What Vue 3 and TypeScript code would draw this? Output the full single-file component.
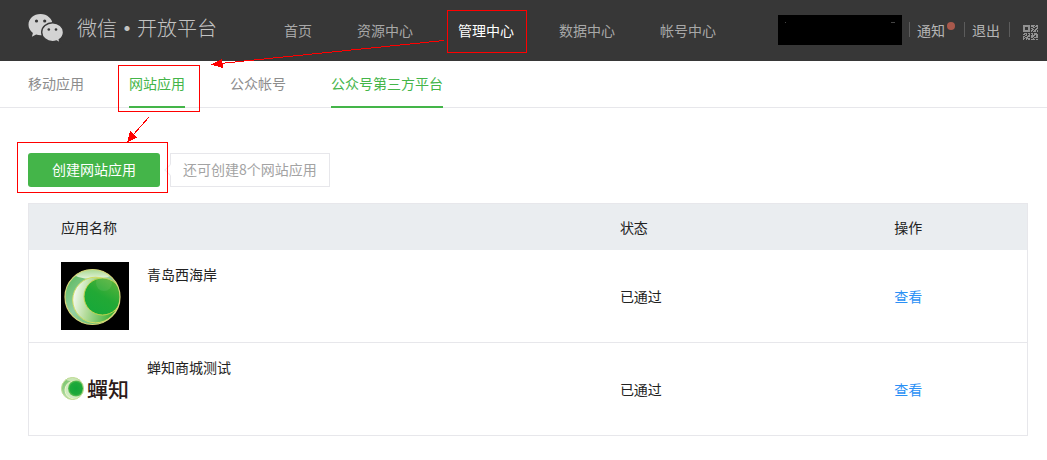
<script setup lang="ts">
interface NavItem {
  label: string
  active?: boolean
}

interface AppRow {
  name: string
  status: string
  logo: 'orb' | 'wordmark'
}

const navItems: NavItem[] = [
  { label: '首页' },
  { label: '资源中心' },
  { label: '管理中心', active: true },
  { label: '数据中心' },
  { label: '帐号中心' },
]

const tabs: NavItem[] = [
  { label: '移动应用' },
  { label: '网站应用', active: true },
  { label: '公众帐号' },
  { label: '公众号第三方平台', active: true },
]

const apps: AppRow[] = [
  { name: '青岛西海岸', status: '已通过', logo: 'orb' },
  { name: '蝉知商城测试', status: '已通过', logo: 'wordmark' },
]

// QR glyph, one character per pixel
const qrRows: string[] = [
  '#######.####.##',
  '#######.###.###',
  '##...##...##..#',
  '##...##.##...##',
  '##...##..##.##.',
  '#######.##.##.#',
  '#######.#.###.#',
  '...............',
  '.###.##.##.###.',
  '##.#..#..#.####',
  '..##.##.####.##',
  '##..###.###..##',
  '#.###...##.####',
  '##.####...#....',
  '#..#.##.####.##',
]

const qrPath: string = qrRows
  .map((row, y) =>
    [...row].map((cell, x) => (cell === '#' ? `M${x} ${y}h1v1h-1z` : '')).join(''),
  )
  .join('')
</script>

<template>
  <div class="page">
    <header class="header">
      <a class="brand" href="#">
        <svg class="brand-icon" width="36" height="30" viewBox="0 0 36 30" aria-hidden="true">
          <path
            fill="#d3d3d3"
            d="M12.5 0C5.800 0 .5 4.700.5 10.700c0 3.300 1.700 6.200 4.400 8.200L3.900 22.800l4.200-2.200c1.400.4 2.900.7 4.500.7 6.600 0 12-4.700 12-10.600S19.200 0 12.500 0z"
          />
          <path
            fill="#d3d3d3"
            stroke="#373737"
            stroke-width="1.400"
            d="M24.600 8.800c-6 0-10.900 4.100-10.900 9.400s4.900 9.400 10.900 9.400c1.400 0 2.700-.2 3.900-.6l3.700 2-.9-3.300c2.500-1.700 4.200-4.500 4.200-7.500 0-5.300-4.900-9.400-10.900-9.400z"
          />
          <g fill="#373737">
            <circle cx="8.500" cy="7" r="1.600" />
            <circle cx="16.700" cy="7" r="1.600" />
            <circle cx="20.800" cy="15.500" r="1.300" />
            <circle cx="28" cy="15.500" r="1.300" />
          </g>
        </svg>
        <span class="brand-name">微信<span class="brand-dot">·</span>开放平台</span>
      </a>
      <nav class="nav">
        <a
          v-for="item in navItems"
          :key="item.label"
          href="#"
          class="nav-link"
          :class="{ active: item.active }"
          >{{ item.label }}</a
        >
      </nav>
      <div class="account">
        <div class="account-name">
          <i class="mark mark-dot"></i>
          <i class="mark mark-dash"></i>
        </div>
        <span class="divider"></span>
        <a class="account-link" href="#">通知<i class="badge"></i></a>
        <span class="divider"></span>
        <a class="account-link" href="#">退出</a>
        <span class="divider"></span>
        <svg class="qr" width="15" height="15" viewBox="0 0 15 15" aria-hidden="true">
          <path :d="qrPath" fill="#919191" shape-rendering="crispEdges" />
        </svg>
      </div>
    </header>

    <nav class="tabs">
      <a
        v-for="tab in tabs"
        :key="tab.label"
        href="#"
        class="tab"
        :class="{ active: tab.active }"
        >{{ tab.label }}</a
      >
    </nav>

    <main class="content">
      <div class="toolbar">
        <button type="button" class="create">创建网站应用</button>
        <p class="quota">还可创建8个网站应用</p>
      </div>

      <table class="apps">
        <thead>
          <tr>
            <th class="col-name">应用名称</th>
            <th class="col-status">状态</th>
            <th>操作</th>
          </tr>
        </thead>
        <tbody>
          <tr v-for="app in apps" :key="app.name">
            <td>
              <div class="app">
                <svg
                  v-if="app.logo === 'orb'"
                  class="logo"
                  width="68"
                  height="68"
                  viewBox="0 0 68 68"
                  aria-hidden="true"
                >
                  <defs>
                    <linearGradient id="orb-base" x1="0" y1="0" x2="1" y2="1">
                      <stop offset="0" stop-color="#3fae3c" />
                      <stop offset="0.450" stop-color="#94cfa2" />
                      <stop offset="1" stop-color="#3fb03f" />
                    </linearGradient>
                    <linearGradient id="orb-crescent" x1="0" y1="0.400" x2="1" y2="0.600">
                      <stop offset="0" stop-color="#f6faf3" />
                      <stop offset="0.350" stop-color="#b5dc9c" />
                      <stop offset="0.900" stop-color="#3fb038" />
                    </linearGradient>
                    <linearGradient id="orb-core" x1="0.200" y1="1" x2="0.800" y2="0">
                      <stop offset="0" stop-color="#16a83a" />
                      <stop offset="0.500" stop-color="#22a935" />
                      <stop offset="1" stop-color="#5db43b" />
                    </linearGradient>
                    <linearGradient id="orb-shine" x1="0" y1="0" x2="0" y2="1">
                      <stop offset="0" stop-color="#8dcc6d" />
                      <stop offset="1" stop-color="#e4f3dc" />
                    </linearGradient>
                    <clipPath id="orb-clip"><circle cx="31.500" cy="35" r="27.500" /></clipPath>
                  </defs>
                  <rect width="68" height="68" fill="#000" />
                  <g clip-path="url(#orb-clip)">
                    <rect width="68" height="68" fill="url(#orb-base)" />
                    <ellipse cx="32" cy="10" rx="21" ry="7" fill="url(#orb-shine)" />
                    <circle
                      cx="34.500"
                      cy="38"
                      r="22.800"
                      fill="url(#orb-crescent)"
                      stroke="#d2dc62"
                      stroke-width="1"
                    />
                    <circle
                      cx="41.500"
                      cy="34.500"
                      r="18.500"
                      fill="url(#orb-core)"
                      stroke="#c2d44c"
                      stroke-width="1"
                    />
                    <circle cx="43" cy="21" r="8" fill="#fff" opacity="0.080" />
                  </g>
                  <circle
                    cx="31.500"
                    cy="35"
                    r="27.500"
                    fill="none"
                    stroke="#d6d67c"
                    stroke-width="1.200"
                  />
                </svg>
                <div v-else class="logo wordmark">
                  <svg width="24" height="24" viewBox="0 0 24 24" aria-hidden="true">
                    <defs>
                      <linearGradient id="mini-base" x1="0" y1="0" x2="1" y2="1">
                        <stop offset="0" stop-color="#63bc55" />
                        <stop offset="0.500" stop-color="#b3dca9" />
                        <stop offset="1" stop-color="#8fca55" />
                      </linearGradient>
                      <radialGradient id="mini-core">
                        <stop offset="0" stop-color="#12a538" />
                        <stop offset="0.750" stop-color="#1fa93a" />
                        <stop offset="1" stop-color="#6cc25a" />
                      </radialGradient>
                      <clipPath id="mini-clip"><circle cx="11.500" cy="11.500" r="11" /></clipPath>
                    </defs>
                    <g clip-path="url(#mini-clip)">
                      <rect width="24" height="24" fill="url(#mini-base)" />
                      <ellipse cx="12" cy="2" rx="8" ry="2" fill="#c9e6b5" />
                      <circle cx="13" cy="13" r="9" fill="#d0eac2" stroke="#eef5c9" stroke-width="1" />
                      <circle cx="15" cy="11.500" r="8" fill="url(#mini-core)" />
                    </g>
                    <circle cx="11.500" cy="11.500" r="11" fill="none" stroke="#c3dc97" stroke-width="1" />
                  </svg>
                  <span class="wordmark-text">蟬知</span>
                </div>
                <span class="app-name">{{ app.name }}</span>
              </div>
            </td>
            <td>{{ app.status }}</td>
            <td><a class="view" href="#">查看</a></td>
          </tr>
        </tbody>
      </table>
    </main>

    <svg class="notes" width="530" height="200" viewBox="0 0 530 200" aria-hidden="true">
      <g fill="none" stroke="#f00" stroke-width="1" shape-rendering="crispEdges">
        <rect x="447.500" y="10.500" width="79" height="42" />
        <rect x="118.500" y="65.500" width="81" height="46" />
        <rect x="17.500" y="142.500" width="150" height="50" />
        <path d="M444 40.500L220 63.500" />
        <path d="M149 117L133 135" />
      </g>
      <g fill="#f00" shape-rendering="crispEdges">
        <path d="M211 64.500L222 59L223 68z" />
        <path d="M127 142.500L130 131L137 137.500z" />
      </g>
    </svg>
  </div>
</template>

<style>
body {
  margin: 0;
  background: #fff;
}
</style>

<style scoped>
.page {
  position: relative;
  font-family: 'Noto Sans CJK SC', sans-serif;
  font-size: 14px;
  line-height: 20px;
  color: #222;
}

a {
  text-decoration: none;
}

.header {
  display: flex;
  box-sizing: border-box;
  align-items: center;
  height: 61px;
  padding: 0 9px 2px 28px;
  background: #373737;
}

.brand {
  display: flex;
  align-items: center;
  gap: 13px;
  margin-right: 67px;
  padding-bottom: 4px;
  color: #c3c3c3;
}

.brand-icon {
  margin-top: 2px;
}

.brand-name {
  display: flex;
  font-size: 20px;
  font-weight: 300;
  line-height: 28px;
}

.brand-dot {
  width: 20px;
  font-weight: 700;
  text-align: center;
}

.nav {
  display: flex;
  gap: 45px;
}

.nav-link {
  color: #a8a8a8;
}

.nav-link.active {
  color: #fff;
}

.account {
  display: flex;
  align-items: center;
  gap: 7px;
  margin-left: auto;
}

.account-name {
  display: flex;
  justify-content: space-between;
  box-sizing: border-box;
  width: 124px;
  height: 30px;
  padding: 7px;
  background: #000;
}

.mark {
  height: 1px;
  background: #444;
}

.mark-dot {
  width: 1px;
}

.mark-dash {
  width: 4px;
}

.divider {
  width: 1px;
  height: 15px;
  background: #5c5c5c;
}

.account-link {
  display: flex;
  margin-right: 2px;
  color: #b5b5b5;
}

.badge {
  width: 8px;
  height: 8px;
  margin: 2px 0 0 2px;
  border-radius: 50%;
  background: #a9594c;
}

.qr {
  margin-top: 5px;
  margin-left: 6px;
}

.tabs {
  display: flex;
  gap: 45px;
  height: 46px;
  padding-left: 28px;
  border-bottom: 1px solid #e7e7eb;
}

.tab {
  box-sizing: border-box;
  height: 47px;
  padding-top: 12px;
  color: #8d8d8d;
}

.tab.active {
  border-bottom: 2px solid #44b549;
  color: #44b549;
}

.content {
  padding: 45px 19px 24px 28px;
}

.toolbar {
  display: flex;
  gap: 10px;
  margin-bottom: 16px;
}

.create {
  width: 132px;
  height: 34px;
  padding: 0 0 2px;
  border: 0;
  border-radius: 3px;
  background: #44b549;
  color: #fff;
  font: inherit;
}

.quota {
  position: relative;
  box-sizing: border-box;
  height: 34px;
  margin: 0;
  padding: 5px 12px;
  border: 1px solid #e7e7eb;
  color: #a3a3a3;
}

.quota::before {
  content: '';
  position: absolute;
  top: 12px;
  left: -5px;
  width: 7px;
  height: 7px;
  border-bottom: 1px solid #efeff2;
  border-left: 1px solid #efeff2;
  background: #fff;
  transform: rotate(45deg);
}

.apps {
  width: 100%;
  border: 1px solid #e7e7eb;
  border-spacing: 0;
  table-layout: fixed;
}

.col-name {
  width: 56%;
}

.col-status {
  width: 27.5%;
}

th,
td {
  box-sizing: border-box;
  padding: 0 0 0 32px;
  text-align: left;
}

th {
  height: 46px;
  background: #eaedf0;
  font-weight: 400;
}

td {
  height: 92px;
}

tbody tr + tr td {
  height: 93px;
  border-top: 1px solid #e7e7eb;
}

.app {
  display: flex;
  gap: 18px;
}

.logo {
  width: 68px;
  height: 68px;
}

.wordmark {
  display: flex;
  align-items: center;
  gap: 2px;
}

.wordmark svg {
  flex: none;
}

.wordmark-text {
  padding-bottom: 2px;
  color: #2d1b19;
  font-family: 'Noto Sans CJK TC', sans-serif;
  font-size: 21px;
  font-weight: 500;
  line-height: 24px;
  white-space: nowrap;
}

.app-name {
  padding-top: 2px;
}

.view {
  color: #2b90f5;
}

.notes {
  position: absolute;
  top: 0;
  left: 0;
  pointer-events: none;
}
</style>
